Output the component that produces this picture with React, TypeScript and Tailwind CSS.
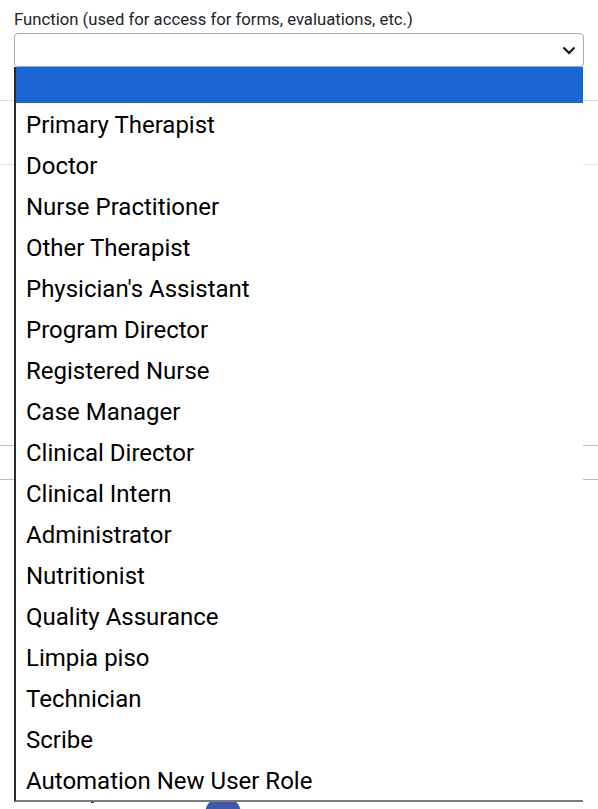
import React from "react";

const options = [
  "Primary Therapist",
  "Doctor",
  "Nurse Practitioner",
  "Other Therapist",
  "Physician's Assistant",
  "Program Director",
  "Registered Nurse",
  "Case Manager",
  "Clinical Director",
  "Clinical Intern",
  "Administrator",
  "Nutritionist",
  "Quality Assurance",
  "Limpia piso",
  "Technician",
  "Scribe",
  "Automation New User Role",
];

export default function App() {
  return (
    <div className="relative w-[598px] h-[809px] overflow-hidden bg-white text-[#212529] font-['Roboto',sans-serif]">
      {/* Field */}
      <div className="px-[14px] pt-[9px]">
        <label className="block text-[16.7px] leading-[21px] whitespace-nowrap">
          Function (used for access for forms, evaluations, etc.)
        </label>
        <div className="mt-[3px] h-[34px] border border-[#aaa] rounded-[4px] bg-white flex items-center justify-end pr-[7px]">
          <svg width="14" height="9" viewBox="0 0 14 9" fill="none">
            <polyline points="1.5,1.5 7,7 12.5,1.5" stroke="#111" strokeWidth="2.2" />
          </svg>
        </div>
      </div>

      {/* Page content behind the open list */}
      <div className="mt-[33px] border-t border-[#cfe0fb]">
        <div className="h-[64px] border-b border-[#e3e3e3]" />
        <div className="h-[281px] border-b border-[#bdbdbd]" />
        <div className="h-[34px] border-b border-[#bdbdbd]" />
        <div className="flex items-start pt-[316px] pl-[91px]">
          <span className="mt-[3px] w-[3px] h-[4px] bg-[#333]" />
          <span className="ml-[111px] w-[36px] h-[36px] rounded-full bg-[#3f58a6]" />
        </div>
      </div>

      {/* Open dropdown list */}
      <ul className="absolute top-[67px] left-[14px] w-[569px] bg-white border-l-2 border-[#2b2b2b] border-b-2 border-b-[#7a7a7a] text-black text-[24px]">
        <li className="h-[36px] bg-[#1a66d2]" />
        {options.map((o) => (
          <li key={o} className="h-[41px] flex items-center pl-[10px] pt-[3px] leading-none">
            {o}
          </li>
        ))}
      </ul>
    </div>
  );
}
